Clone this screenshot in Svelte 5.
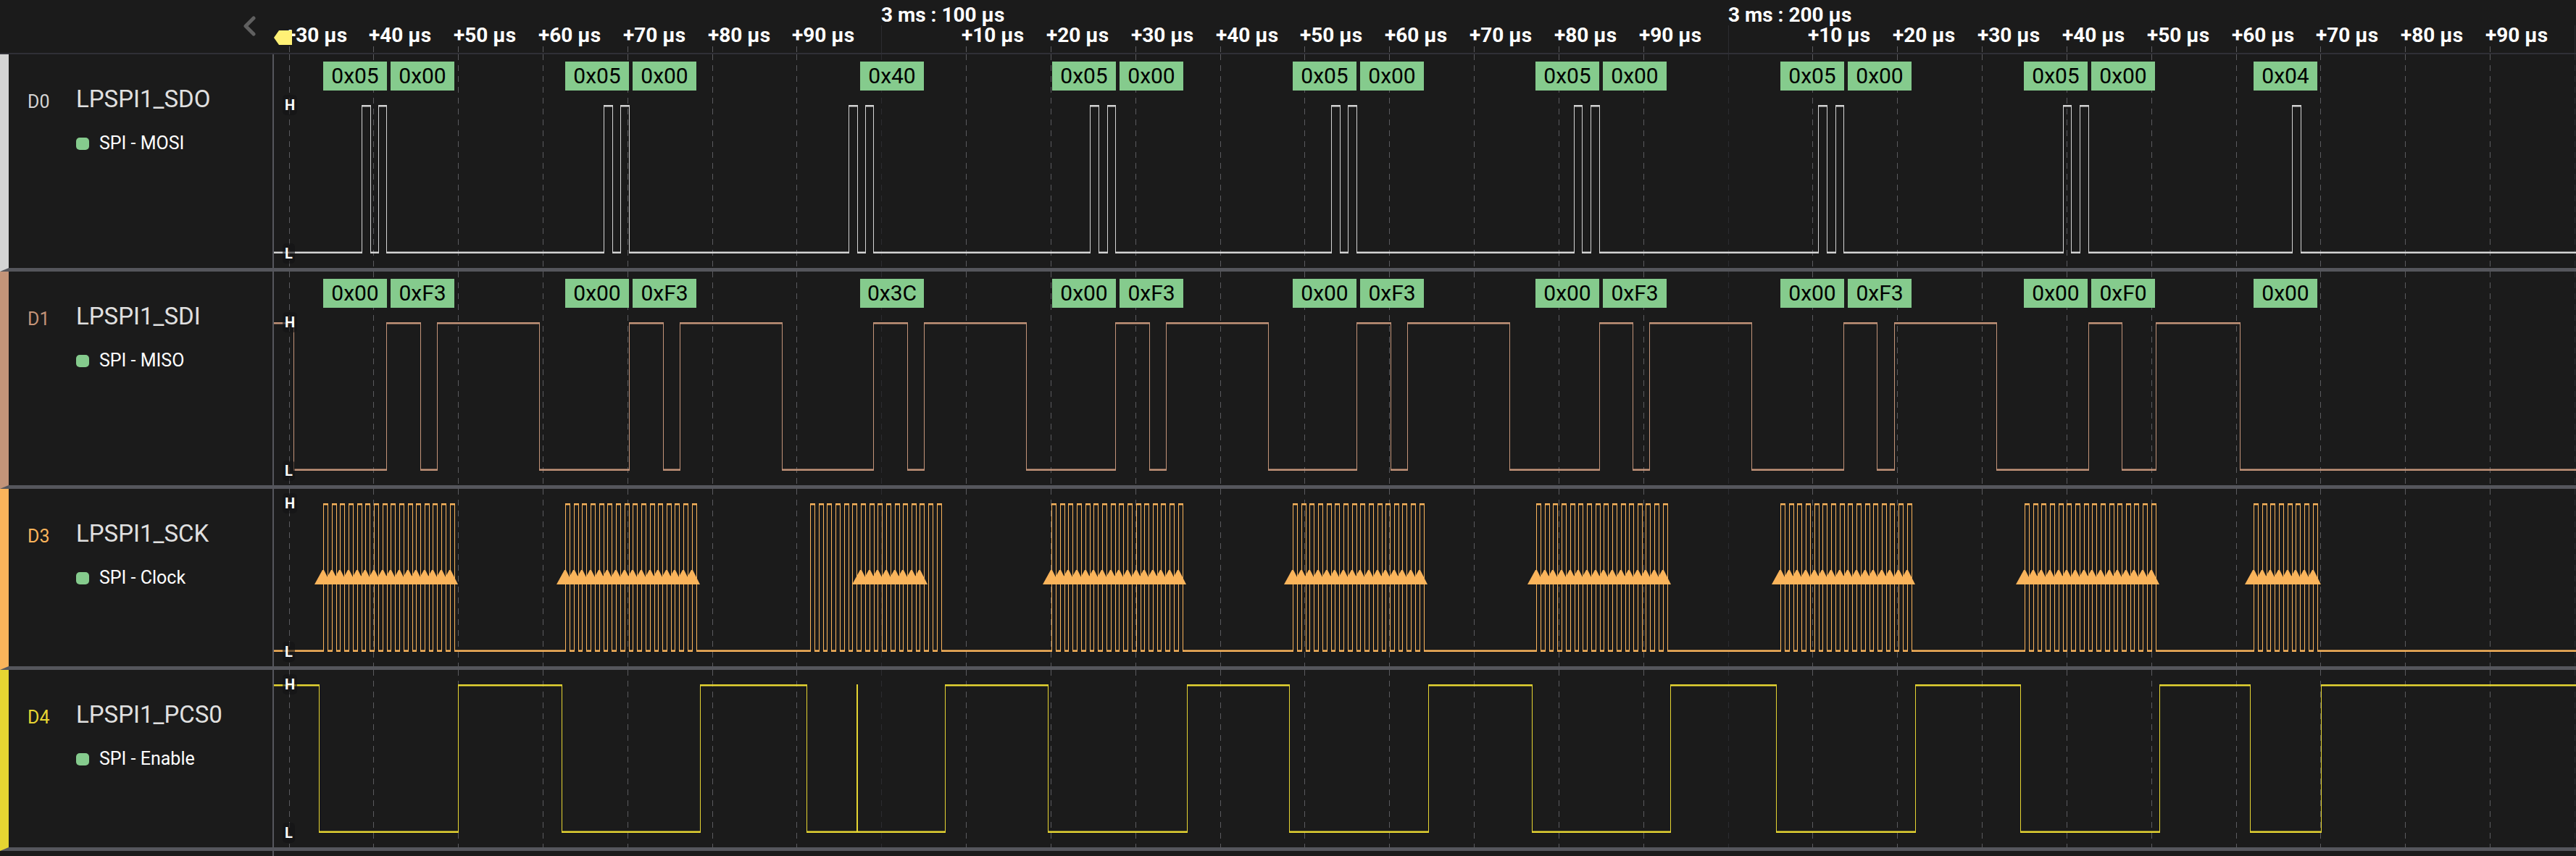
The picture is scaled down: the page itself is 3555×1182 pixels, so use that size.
<script>
  // Horizontal positions are stored for a 3177-unit wide view and scaled to the plot's width.
  const VIEW = 3177;
  let width = $state(VIEW);
  const scale = $derived(width / VIEW);

  const TICK_START = 20.5;
  const TICK_STEP = 116.83;
  const ticks = Array.from({ length: 28 }, (_, i) => {
    const us = 30 + i * 10;
    const major = us % 100 === 0;
    return {
      x: TICK_START + i * TICK_STEP,
      major,
      label: major ? `3 ms : ${us} µs` : `+${us % 100} µs`
    };
  });

  const PERIOD = 11.65;
  const bursts = [
    [68, 16], [402, 16], [740, 16], [1073, 16], [1406, 16],
    [1742, 16], [2079, 16], [2416, 16], [2732, 8]
  ];
  const clock = bursts.flatMap(([s, n]) =>
    Array.from({ length: n }, (_, i) => [s + i * PERIOD, s + i * PERIOD + 6]).flat()
  );
  // The third burst is only decoded after the enable glitch, for eight clocks.
  const arrows = bursts.flatMap(([s, n], b) =>
    Array.from({ length: n }, (_, i) => i)
      .filter((i) => b !== 2 || (i >= 6 && i < 14))
      .map((i) => s + i * PERIOD)
  );

  const frames = [68, 402, 809, 1074, 1406, 1741, 2079, 2415, 2732];
  const words = (list) =>
    list.flatMap((group, i) => group.map((text, k) => ({ text, x: frames[i] + k * 93 })));

  const channels = [
    {
      id: 'D0', name: 'LPSPI1_SDO', role: 'SPI - MOSI', color: '#d4d4d4', tall: true, start: 0,
      edges: [121, 133, 144, 155, 455, 467, 478, 490, 793, 805, 816, 827, 1126, 1138, 1150, 1161,
        1459, 1471, 1482, 1494, 1794, 1805, 1817, 1829, 2131, 2143, 2155, 2166, 2469, 2480, 2492, 2504, 2785, 2797],
      words: words([['0x05', '0x00'], ['0x05', '0x00'], ['0x40'], ['0x05', '0x00'], ['0x05', '0x00'],
        ['0x05', '0x00'], ['0x05', '0x00'], ['0x05', '0x00'], ['0x04']]),
      arrows: []
    },
    {
      id: 'D1', name: 'LPSPI1_SDI', role: 'SPI - MISO', color: '#c39479', tall: true, start: 1,
      edges: [27, 155, 202, 225, 366, 490, 537, 560, 701, 827, 874, 897, 1038, 1161, 1208, 1231, 1372, 1494, 1541, 1564,
        1705, 1829, 1875, 1898, 2039, 2166, 2212, 2236, 2377, 2504, 2550, 2597, 2713],
      words: words([['0x00', '0xF3'], ['0x00', '0xF3'], ['0x3C'], ['0x00', '0xF3'], ['0x00', '0xF3'],
        ['0x00', '0xF3'], ['0x00', '0xF3'], ['0x00', '0xF0'], ['0x00']]),
      arrows: []
    },
    {
      id: 'D3', name: 'LPSPI1_SCK', role: 'SPI - Clock', color: '#fab45b', tall: false, start: 0,
      edges: clock, words: [], arrows
    },
    {
      id: 'D4', name: 'LPSPI1_PCS0', role: 'SPI - Enable', color: '#e6d532', tall: false, start: 1,
      edges: [62, 254, 397, 588, 735, 804, 805, 926, 1068, 1260, 1401, 1593, 1736, 1927, 2073, 2265, 2410, 2602, 2727, 2825],
      words: [], arrows: []
    }
  ];

  // The enable line falls at 735, spikes high at 804 and rises again at 926.
  function trace(ch, k) {
    const hi = ch.tall ? 70 : 20;
    const lo = ch.tall ? 275 : 225;
    let level = ch.start;
    let x = 0;
    const flats = [];
    const walls = [];
    for (const e of ch.edges) {
      const nx = Math.round(e * k);
      flats.push({ x, w: nx - x + 1, level });
      walls.push(nx);
      x = nx;
      level = 1 - level;
    }
    flats.push({ x, w: Math.max(0, width - x), level });
    return {
      hi, lo, walls,
      bright: flats.map((f) => ({ x: f.x, w: f.w, y: f.level ? hi : lo - 2 })),
      soft: flats.map((f) => ({ x: f.x, w: f.w, y: f.level ? hi + 2 : lo - 3 }))
    };
  }
</script>

<main class="analyzer">
  <header class="ruler">
    <div class="corner">
      <button class="collapse" aria-label="Collapse channel panel">
        <svg width="18" height="28" viewBox="0 0 18 28" aria-hidden="true">
          <path d="M15 3 L4 14 L15 25" fill="none" stroke="#606060" stroke-width="5" stroke-linecap="round" stroke-linejoin="round" />
        </svg>
      </button>
    </div>
    <div class="scale">
      {#each ticks as t, i}
        <span class="tick" class:major={t.major} style:left="{Math.round(t.x * scale)}px">
          {#if i < ticks.length - 1}
            <span class="tick-label">{t.label}</span>
          {/if}
        </span>
      {/each}
      <svg class="marker" width="25" height="20" viewBox="0 0 25 20" aria-hidden="true">
        <path d="M0 10 L7 0 H25 V20 H7 Z" fill="#fff176" />
      </svg>
    </div>
  </header>

  {#each channels as ch, i}
    {@const t = trace(ch, scale)}
    <section class="channel" class:tall={ch.tall} style:border-left-color={ch.color}>
      <div class="info">
        <span class="id" style:color={ch.color}>{ch.id}</span>
        <div class="names">
          <h2>{ch.name}</h2>
          <p><i class="swatch"></i>{ch.role}</p>
        </div>
      </div>
      <div class="plot">
        {#if i === 0}
          <div class="probe" bind:clientWidth={width}></div>
        {/if}
        <svg class="wave" aria-hidden="true">
          {#each ticks as g}
            <line class="grid" class:faint={g.major} x1={Math.round(g.x * scale) + 0.5} x2={Math.round(g.x * scale) + 0.5} y1="0" y2={ch.tall ? 295 : 245} />
          {/each}
          <g fill={ch.color}>
            {#each t.soft as f}<rect x={f.x} y={f.y} width={f.w} height="1" opacity="0.5" />{/each}
            {#each t.bright as f}<rect x={f.x} y={f.y} width={f.w} height="2" />{/each}
            {#each t.walls as w}<rect x={w} y={t.hi} width="1" height={t.lo - t.hi} />{/each}
            {#each ch.arrows as a}
              {@const c = Math.round(a * scale)}
              <path d="M{c - 1} 112 H{c + 1} L{c + 11} 132 H{c - 12} Z" />
            {/each}
          </g>
        </svg>
        <span class="level high">H</span>
        <span class="level low">L</span>
        {#each ch.words as w}
          <span class="word" style:left="{Math.round(w.x * scale)}px">{w.text}</span>
        {/each}
      </div>
    </section>
  {/each}
  <div class="rest"></div>
</main>

<style>
  :global(body) {
    margin: 0;
    background: #1b1b1b;
  }
  .analyzer {
    display: flex;
    flex-direction: column;
    min-height: 100vh;
    background: #1b1b1b;
    color: #fff;
    font-family: Roboto, sans-serif;
    overflow: hidden;
  }
  .ruler {
    display: flex;
    height: 73px;
    border-bottom: 2px solid #303036;
  }
  .corner {
    box-sizing: border-box;
    width: 378px;
    flex: none;
    display: flex;
    justify-content: flex-end;
    align-items: flex-start;
    padding: 22px 25px 0 0;
  }
  .collapse {
    display: flex;
    padding: 0;
    border: 0;
    background: none;
  }
  .scale {
    position: relative;
    flex: 1;
    overflow: hidden;
  }
  .tick {
    position: absolute;
    top: 64px;
    width: 1px;
    height: 8px;
    background: #5a5a5e;
  }
  .tick.major {
    top: 35px;
    height: 38px;
    background: #2c2c30;
  }
  .tick-label {
    position: absolute;
    left: -6px;
    bottom: 8px;
    font-size: 28px;
    line-height: 30px;
    font-weight: 700;
    white-space: nowrap;
  }
  .major .tick-label {
    left: 0;
    bottom: 37px;
  }
  .marker {
    position: absolute;
    left: 0;
    top: 42px;
  }
  .channel {
    display: flex;
    height: 245px;
    border-left: 12px solid;
    border-bottom: 5px solid #55565c;
  }
  .channel.tall {
    height: 295px;
  }
  .info {
    box-sizing: border-box;
    width: 366px;
    flex: none;
    display: flex;
    padding: 42px 0 0 26px;
    border-right: 2px solid #55565c;
  }
  .id {
    width: 67px;
    font-size: 25px;
    line-height: 47px;
  }
  .names {
    flex: 1;
  }
  h2 {
    margin: 0;
    font-size: 33px;
    line-height: 40px;
    font-weight: 400;
    color: #e0e0e0;
  }
  p {
    margin: 25px 0 0;
    display: flex;
    align-items: center;
    gap: 14px;
    font-size: 25px;
    line-height: 32px;
  }
  .swatch {
    width: 18px;
    height: 17px;
    border-radius: 5px;
    background: #85cb8d;
  }
  .plot {
    position: relative;
    flex: 1;
    min-width: 0;
    overflow: hidden;
  }
  .wave {
    display: block;
    width: 100%;
    height: 100%;
  }
  .grid {
    stroke: #5a5a5e;
    stroke-width: 1;
    stroke-dasharray: 8 7;
  }
  .grid.faint {
    stroke: #2c2c30;
  }
  .level {
    position: absolute;
    left: 12px;
    padding: 0 3px;
    border-radius: 5px;
    background: rgba(20, 20, 22, 0.6);
    font-size: 20px;
    line-height: 28px;
    font-weight: 700;
  }
  .high {
    top: 6px;
  }
  .low {
    top: 211px;
  }
  .tall .high {
    top: 56px;
  }
  .tall .low {
    top: 261px;
  }
  .word {
    position: absolute;
    top: 10px;
    width: 88px;
    height: 40px;
    background: #85cb8d;
    color: #000;
    font-size: 30px;
    line-height: 40px;
    text-align: center;
  }
  .rest {
    box-sizing: border-box;
    width: 378px;
    flex: 1;
    border-right: 2px solid #55565c;
  }
</style>
